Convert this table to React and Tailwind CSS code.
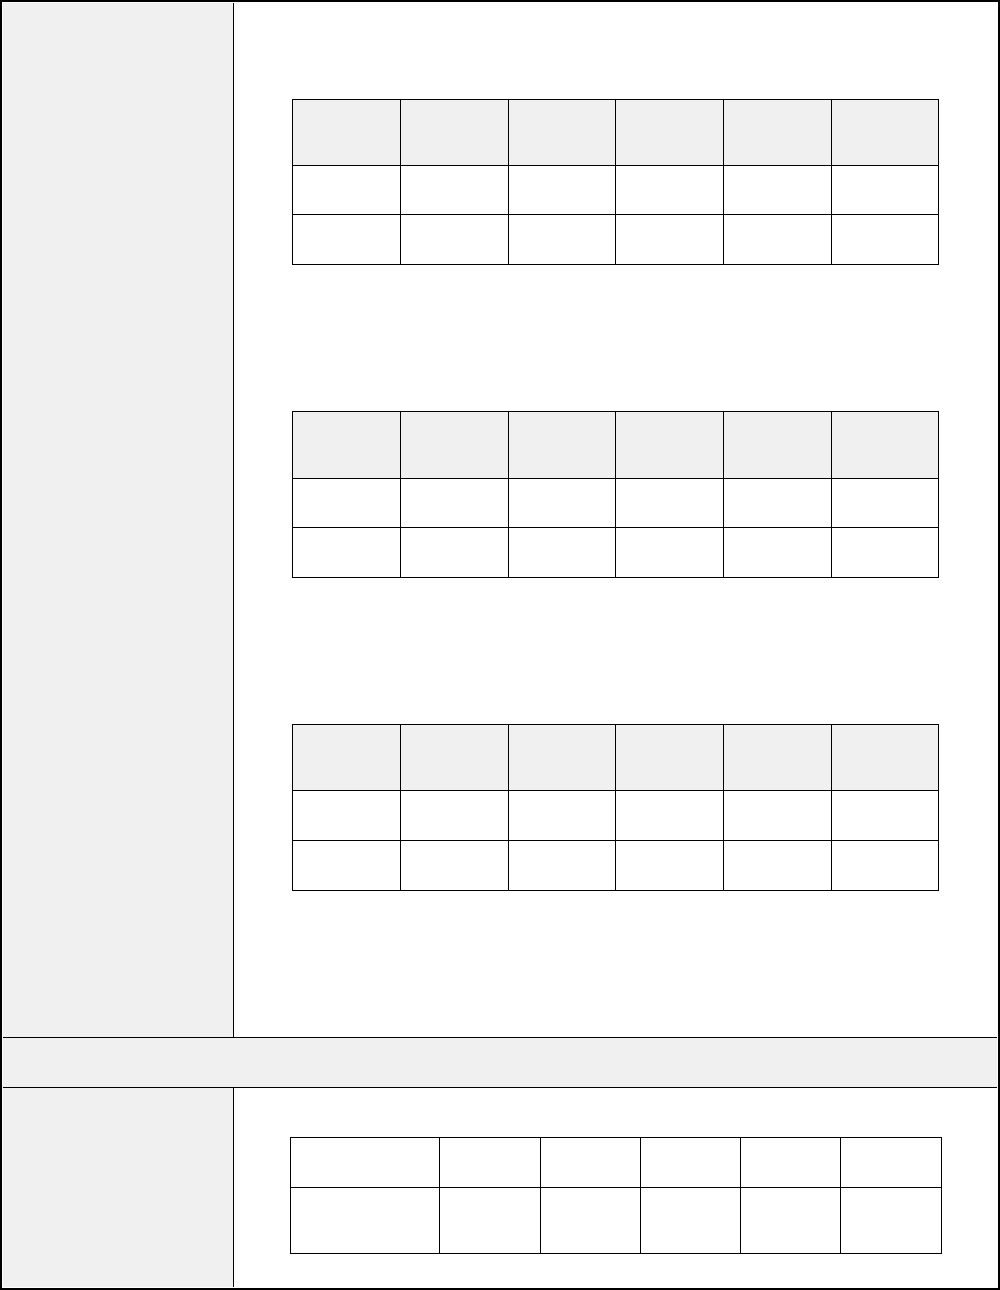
const topCols = "grid grid-cols-[108px_108px_107px_108px_108px_107px]";
const bottomCols = "grid grid-cols-[149px_101px_100px_100px_100px_101px]";

function DataTable({ className = "", head = "h-[66px]", rowA = "h-[49px]", rowB = "h-[50px]" }) {
  const cells = Array.from({ length: 6 });
  return (
    <div className={`w-[647px] border-t border-l border-black ${className}`}>
      <div className={topCols}>
        {cells.map((_, i) => (
          <div key={i} className={`${head} border-r border-b border-black bg-[#f0f0f0]`} />
        ))}
      </div>
      <div className={topCols}>
        {cells.map((_, i) => (
          <div key={i} className={`${rowA} border-r border-b border-black`} />
        ))}
      </div>
      <div className={topCols}>
        {cells.map((_, i) => (
          <div key={i} className={`${rowB} border-r border-b border-black`} />
        ))}
      </div>
    </div>
  );
}

function SummaryTable() {
  const cells = Array.from({ length: 6 });
  return (
    <div className="ml-[56px] mt-[49px] w-[652px] border-t border-l border-black">
      <div className={bottomCols}>
        {cells.map((_, i) => (
          <div key={i} className="h-[50px] border-r border-b border-black" />
        ))}
      </div>
      <div className={bottomCols}>
        {cells.map((_, i) => (
          <div key={i} className="h-[66px] border-r border-b border-black" />
        ))}
      </div>
    </div>
  );
}

export default function App() {
  return (
    <div
      className="w-[1000px] h-[1290px] border-2 border-black bg-white p-px"
      style={{ fontFamily: "'Liberation Sans', Arial, sans-serif" }}
    >
      <div className="flex h-[1035px] border-b border-black">
        <div className="w-[231px] shrink-0 border-r border-black bg-[#f0f0f0]" />
        <div className="flex-1 pl-[58px] pt-[96px]">
          <DataTable />
          <DataTable className="mt-[146px]" head="h-[67px]" />
          <DataTable className="mt-[146px]" rowA="h-[50px]" />
        </div>
      </div>
      <div className="h-[50px] border-b border-black bg-[#f0f0f0]" />
      <div className="flex h-[199px]">
        <div className="w-[231px] shrink-0 border-r border-black bg-[#f0f0f0]" />
        <div className="flex-1">
          <SummaryTable />
        </div>
      </div>
    </div>
  );
}
